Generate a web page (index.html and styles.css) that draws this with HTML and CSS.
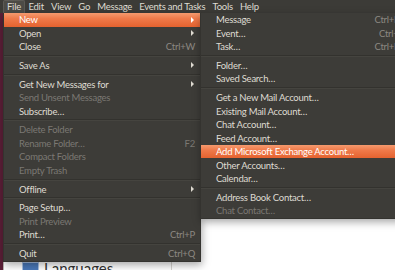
FILE: index.html
```html
<!DOCTYPE html>
<html lang="en">
<head>
  <meta charset="UTF-8" />
  <title>Thunderbird - File menu</title>
  <link rel="stylesheet" href="styles.css">
</head>
<body>
  <div class="menubar">
    <span class="mb-item active">File</span>
    <span class="mb-item">Edit</span>
    <span class="mb-item">View</span>
    <span class="mb-item">Go</span>
    <span class="mb-item">Message</span>
    <span class="mb-item">Events and Tasks</span>
    <span class="mb-item">Tools</span>
    <span class="mb-item">Help</span>
  </div>

  <div class="window">
    <div class="edge"></div>
    <div class="content">
      <div class="sidebar">
        <div class="pane-row">
          <span class="pane-icon"></span>
          <span class="pane-label">Languages</span>
        </div>
      </div>
    </div>
  </div>

  <div class="menu file-menu">
    <div class="item hover"><span class="label">New</span><span class="arrow"></span></div>
    <div class="item"><span class="label">Open</span><span class="arrow"></span></div>
    <div class="item"><span class="label">Close</span><span class="accel">Ctrl+W</span></div>
    <div class="sep"></div>
    <div class="item"><span class="label">Save As</span><span class="arrow"></span></div>
    <div class="sep"></div>
    <div class="item"><span class="label">Get New Messages for</span><span class="arrow"></span></div>
    <div class="item off"><span class="label">Send Unsent Messages</span></div>
    <div class="item"><span class="label">Subscribe…</span></div>
    <div class="sep"></div>
    <div class="item off"><span class="label">Delete Folder</span></div>
    <div class="item off"><span class="label">Rename Folder…</span><span class="accel">F2</span></div>
    <div class="item off"><span class="label">Compact Folders</span></div>
    <div class="item off"><span class="label">Empty Trash</span></div>
    <div class="sep"></div>
    <div class="item"><span class="label">Offline</span><span class="arrow"></span></div>
    <div class="sep"></div>
    <div class="item"><span class="label">Page Setup…</span></div>
    <div class="item off"><span class="label">Print Preview</span></div>
    <div class="item"><span class="label">Print…</span><span class="accel">Ctrl+P</span></div>
    <div class="sep"></div>
    <div class="item"><span class="label">Quit</span><span class="accel">Ctrl+Q</span></div>
  </div>

  <div class="menu submenu">
    <div class="item"><span class="label">Message</span><span class="accel">Ctrl+N</span></div>
    <div class="item"><span class="label">Event…</span><span class="accel">Ctrl+I</span></div>
    <div class="item"><span class="label">Task…</span><span class="accel">Ctrl+D</span></div>
    <div class="sep"></div>
    <div class="item"><span class="label">Folder…</span></div>
    <div class="item"><span class="label">Saved Search…</span></div>
    <div class="sep"></div>
    <div class="item"><span class="label">Get a New Mail Account…</span></div>
    <div class="item"><span class="label">Existing Mail Account…</span></div>
    <div class="item"><span class="label">Chat Account…</span></div>
    <div class="item"><span class="label">Feed Account…</span></div>
    <div class="item hover"><span class="label">Add Microsoft Exchange Account…</span></div>
    <div class="item"><span class="label">Other Accounts…</span></div>
    <div class="item"><span class="label">Calendar…</span></div>
    <div class="sep"></div>
    <div class="item"><span class="label">Address Book Contact…</span></div>
    <div class="item off"><span class="label">Chat Contact…</span></div>
  </div>
</body>
</html>
```

FILE: styles.css
```css
body {
  margin: 0;
  width: 395px;
  height: 270px;
  overflow: hidden;
  position: relative;
  background: #fff;
  font-family: Lato, 'Noto Sans', sans-serif;
  font-size: 9.5px;
  letter-spacing: -0.25px;
  color: #dfdbd2;
}

.menubar {
  height: 13px;
  background: #3c3b37;
  display: flex;
  align-items: center;
  padding-left: 3px;
  white-space: nowrap;
}

.mb-item {
  height: 13px;
  line-height: 13px;
  padding: 0 3.6px;
  box-sizing: border-box;
}

.mb-item.active {
  background: #4c4b46;
  border: 1px solid #5c5a55;
  border-bottom: none;
  border-radius: 2px 2px 0 0;
  padding: 0 3px;
  line-height: 12px;
}

.window {
  display: flex;
  height: 257px;
}

.edge {
  width: 3px;
  background: #5b1f37;
}

.content {
  flex: 1;
  background: #fff;
  border-left: 1px solid #b9b7b3;
  display: flex;
}

.sidebar {
  width: 168px;
  border-right: 1px solid #d6d4d0;
  padding-top: 248px;
  box-sizing: border-box;
}

.pane-row {
  display: flex;
  align-items: flex-start;
  gap: 5px;
  padding-left: 18px;
}

.pane-icon {
  width: 15px;
  height: 14px;
  background: #4a78b8;
  border: 1px solid #a8c2e4;
  margin-top: 1px;
}

.pane-label {
  font-size: 15px;
  line-height: 15px;
  letter-spacing: 0;
  color: #333;
}

/* menus */
.menu {
  position: absolute;
  top: 13px;
  background: #3d3c38;
  border: 1px solid #34332f;
  border-top: none;
  box-shadow: 1px 3px 8px rgba(0, 0, 0, 0.35);
  white-space: nowrap;
}

.file-menu {
  left: 3px;
  width: 196px;
  padding-bottom: 1px;
}

.submenu {
  left: 200px;
  width: 205px;
  z-index: 2;
}

.item {
  height: 13.5px;
  display: flex;
  align-items: center;
  padding: 0 5px 0 15px;
}

.item .label { flex: 1; }

.item .accel {
  color: #8c8882;
}

.item.off,
.item.off .accel {
  color: #7b7873;
}

.item.hover {
  background: linear-gradient(#f59a6e, #ef7a4a 40%, #e4622f);
  color: #fff;
}

.arrow {
  width: 0;
  height: 0;
  border-left: 3px solid #dfdbd2;
  border-top: 3px solid transparent;
  border-bottom: 3px solid transparent;
  margin-right: 1px;
}

.item.hover .arrow { border-left-color: #fff; }

.sep {
  height: 0;
  margin: 1.5px 0 1.7px;
  border-top: 1px solid #33322e;
  border-bottom: 1px solid #45443f;
}
```
